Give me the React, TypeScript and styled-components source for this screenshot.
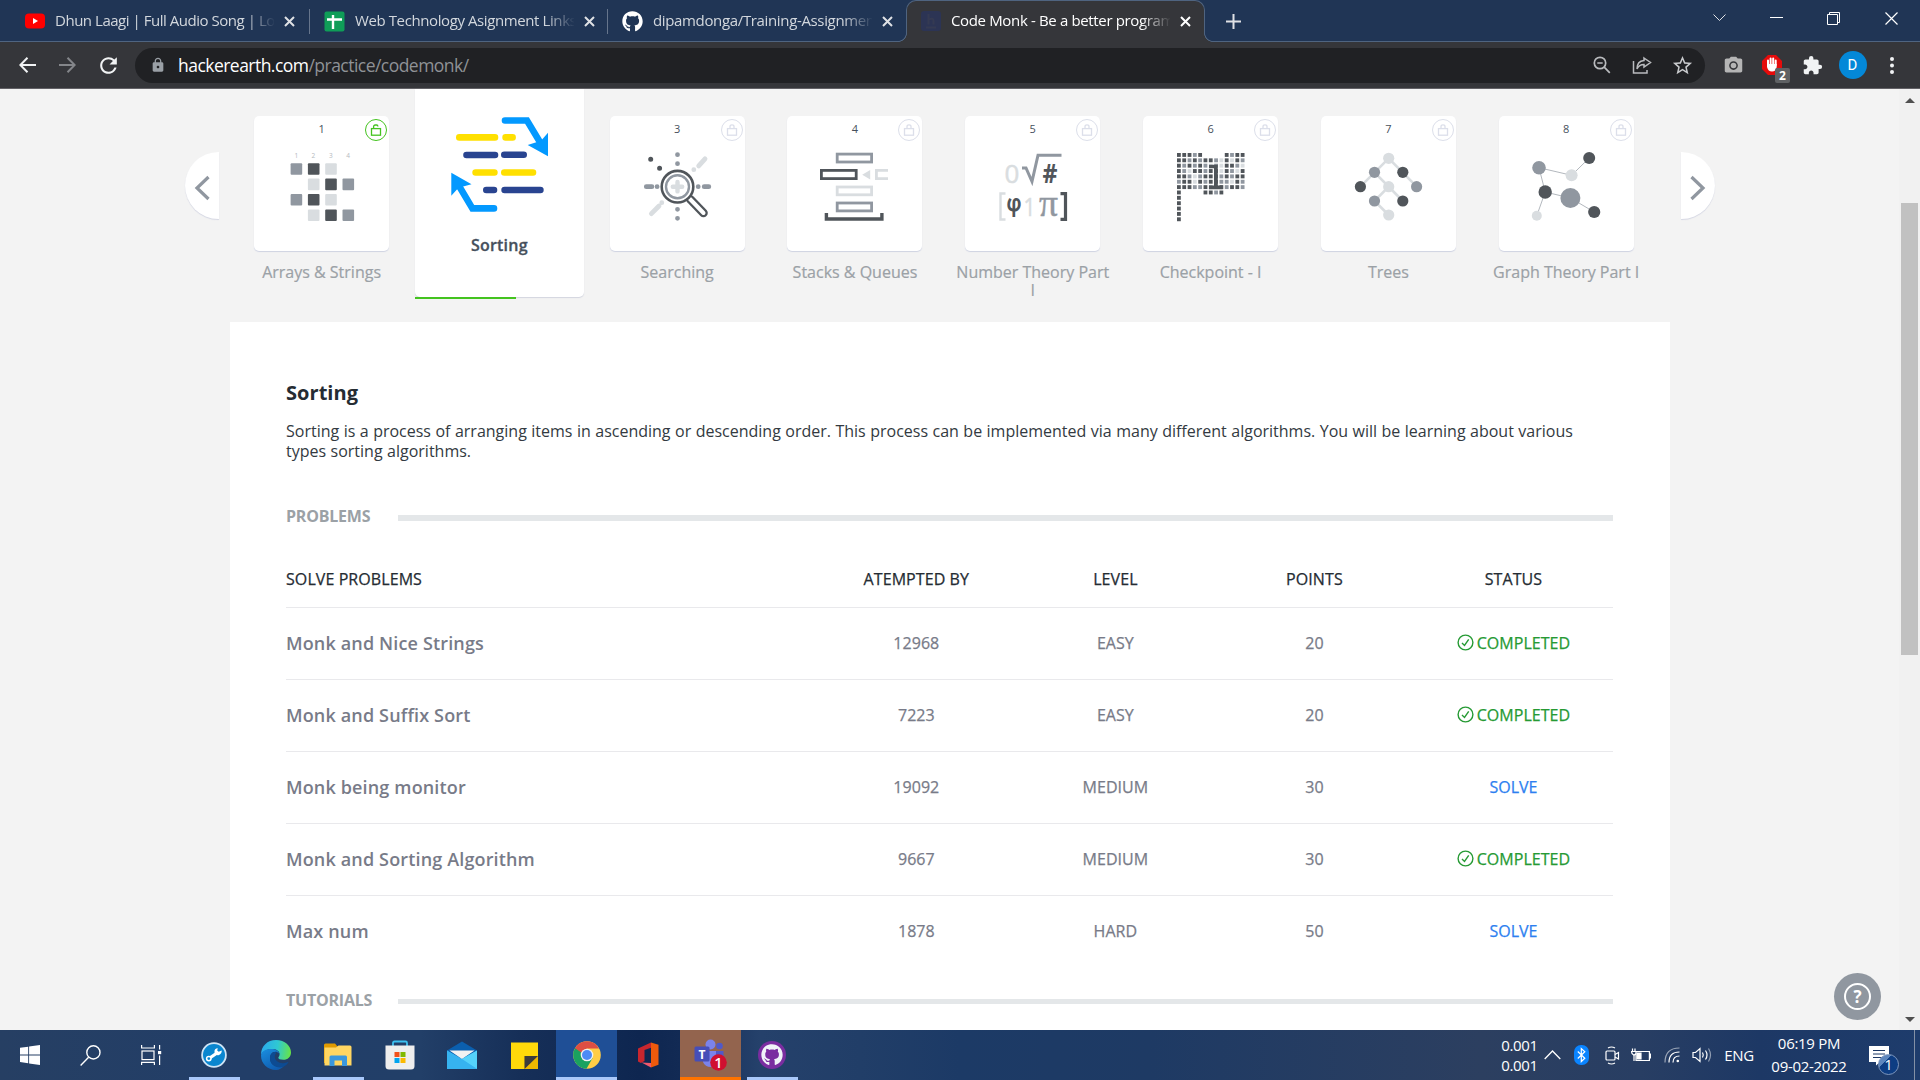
import React from "react";
import styled, { createGlobalStyle, css } from "styled-components";
import { FaGithub } from "react-icons/fa";
import { MdExtension, MdStarBorder, MdPhotoCamera, MdLock, MdRefresh } from "react-icons/md";

const DARK = "#50555a";
const GREY = "#9097a0";
const LIGHT = "#d9dde0";

const GlobalStyle = createGlobalStyle`
  * { box-sizing: border-box; }
  html, body { margin: 0; padding: 0; overflow: hidden; }
  body { font-family: "Open Sans", "Noto Sans", sans-serif; background: #f3f3f3; }
  svg { display: block; flex: none; }
`;

const Screen = styled.div`
  width: 1920px;
  height: 1080px;
  display: flex;
  flex-direction: column;
  overflow: hidden;
`;

/* ---------- browser chrome ---------- */

const TabStrip = styled.div`
  height: 42px;
  flex: none;
  display: flex;
  background: #203555;
  box-shadow: inset 0 -1px 0 #4f6480;
`;

const Tab = styled.div<{ $w: number; $active?: boolean; $sep?: boolean; $first?: boolean }>`
  position: relative;
  width: ${(p) => p.$w}px;
  height: 42px;
  display: flex;
  align-items: center;
  padding: 0 0 0 ${(p) => (p.$first ? 24 : 14)}px;
  color: ${(p) => (p.$active ? "#ffffff" : "#d2d7dd")};
  ${(p) =>
    p.$sep &&
    css`
      &::after {
        content: "";
        position: absolute;
        right: 0;
        top: 9px;
        width: 1px;
        height: 25px;
        background: #66758c;
      }
    `}
  ${(p) =>
    p.$active &&
    css`
      background: #35363a;
      border: 1px solid #4f6480;
      border-bottom: none;
      border-radius: 10px 10px 0 0;
      padding-left: 13px;
      padding-bottom: 1px;
      &::before,
      &::after {
        content: "";
        position: absolute;
        bottom: 0;
        width: 9px;
        height: 9px;
      }
      &::before {
        left: -9px;
        background: radial-gradient(circle at 0 0, #203555 7.6px, #4f6480 8.2px, #4f6480 8.6px, #35363a 9.2px);
      }
      &::after {
        right: -9px;
        background: radial-gradient(circle at 100% 0, #203555 7.6px, #4f6480 8.2px, #4f6480 8.6px, #35363a 9.2px);
      }
    `}
`;

const Favicon = styled.div`
  width: 21px;
  height: 21px;
  flex: none;
  display: flex;
  align-items: center;
  justify-content: center;
`;

const TabTitle = styled.div<{ $ls?: number }>`
  width: 219px;
  margin: 0 0 2px 10px;
  font-size: 15px;
  line-height: 22px;
  letter-spacing: ${(p) => p.$ls ?? -0.35}px;
  white-space: nowrap;
  overflow: hidden;
  mask-image: linear-gradient(90deg, #000 190px, transparent 220px);
`;

const TabClose = styled.div`
  margin-left: 10px;
`;

const NewTab = styled.div`
  width: 54px;
  margin-left: 1px;
  display: flex;
  align-items: center;
  justify-content: center;
`;

const WindowControls = styled.div`
  margin-left: auto;
  display: flex;
  height: 36px;
`;

const WinButton = styled.div`
  width: 57.4px;
  display: flex;
  align-items: center;
  justify-content: center;
`;

const Toolbar = styled.div`
  height: 47px;
  flex: none;
  display: flex;
  align-items: center;
  background: #35363a;
  border-bottom: 1px solid #626166;
  padding: 0 7px 0 7px;
`;

const ToolButton = styled.div<{ $w: number; $ml?: number }>`
  position: relative;
  width: ${(p) => p.$w}px;
  height: 30px;
  margin-left: ${(p) => p.$ml ?? 0}px;
  flex: none;
  display: flex;
  align-items: center;
  justify-content: center;
`;

const AddressBar = styled.div`
  width: 1570px;
  height: 35px;
  margin-left: 7px;
  display: flex;
  align-items: center;
  border-radius: 18px;
  background: #202124;
  padding: 0 2px 0 15px;
`;

const Url = styled.div`
  flex: 1;
  margin-left: 12px;
  font-size: 17.5px;
  line-height: 30px;
  letter-spacing: -0.53px;
  color: #8f9296;
  span {
    color: #ffffff;
  }
`;

const Avatar = styled.div`
  width: 28px;
  height: 28px;
  border-radius: 50%;
  background: #0488d8;
  color: #fff;
  font: 15px/28px Roboto, sans-serif;
  text-align: center;
`;

const BlockCount = styled.div`
  position: absolute;
  left: 22px;
  top: 18px;
  width: 15px;
  height: 15px;
  border-radius: 2px;
  background: #5f6164;
  color: #fff;
  font: 700 12px/16px "Open Sans", sans-serif;
  text-align: center;
`;

/* ---------- page ---------- */

const Viewport = styled.div`
  height: 941px;
  flex: none;
  display: flex;
  overflow: hidden;
  position: relative;
`;

const Page = styled.div`
  width: 1899px;
  display: flex;
  flex-direction: column;
  align-items: center;
  background: #f3f3f3;
`;

const Scrollbar = styled.div`
  width: 21px;
  background: #f1f1f1;
  display: flex;
  flex-direction: column;
  align-items: center;
`;

const ScrollArrow = styled.div<{ $down?: boolean }>`
  width: 0;
  height: 0;
  margin: ${(p) => (p.$down ? "auto 0 8px" : "9px 0 0")};
  border: 5px solid transparent;
  ${(p) => (p.$down ? "border-top-color: #505050; border-bottom: none;" : "border-bottom-color: #505050; border-top: none;")}
`;

const ScrollThumb = styled.div`
  width: 17px;
  height: 452px;
  margin-top: 100px;
  background: #c1c1c1;
`;

const Carousel = styled.div`
  width: 1530px;
  height: 233px;
  margin-left: 1px;
  flex: none;
  display: flex;
`;

const ArrowButton = styled.div<{ $side: "left" | "right" }>`
  width: 34px;
  height: 67px;
  margin-top: 63px;
  margin-left: ${(p) => (p.$side === "right" ? "auto" : "0")};
  padding-top: 4px;
  display: flex;
  align-items: center;
  justify-content: center;
  background: #fff;
  border-radius: ${(p) => (p.$side === "left" ? "34px 0 0 34px" : "0 34px 34px 0")};
  box-shadow: 0 1px 1px #d5d7e3;
`;

const Topics = styled.div`
  display: grid;
  grid-template-columns: repeat(8, 177.8px);
  margin-left: 13.7px;
`;

const Topic = styled.div`
  display: flex;
  flex-direction: column;
  align-items: center;
  padding-top: 27px;
`;

const TopicCard = styled.div`
  position: relative;
  width: 135px;
  height: 135px;
  flex: none;
  background: #fff;
  border-radius: 5px;
  box-shadow: 0 1px 1px #cfd3e2;
`;

const TopicNumber = styled.div`
  position: absolute;
  left: 0;
  right: 0;
  top: 5px;
  text-align: center;
  font-size: 11px;
  line-height: 16px;
  color: #46505c;
`;

const LockBadge = styled.div<{ $open?: boolean }>`
  position: absolute;
  right: 2px;
  top: 3px;
  width: 22px;
  height: 22px;
  border-radius: 50%;
  border: 1px solid ${(p) => (p.$open ? "#44c31f" : "#dcdfea")};
  color: ${(p) => (p.$open ? "#44c31f" : "#dcdfea")};
  display: flex;
  align-items: center;
  justify-content: center;
`;

const TopicLabel = styled.div`
  width: 160px;
  margin-top: 12px;
  font-size: 16px;
  line-height: 18px;
  text-align: center;
  color: #9ba1a6;
  -webkit-text-stroke: 0.2px #9ba1a6;
`;

const CurrentTopic = styled.div`
  position: relative;
  justify-self: center;
  width: 169px;
  height: 208px;
  background: #fff;
  border-radius: 0 0 5px 5px;
  box-shadow: 0 1px 1px #d3d5df;
`;

const CurrentLabel = styled.div`
  position: absolute;
  left: 0;
  right: 0;
  top: 144px;
  text-align: center;
  font-size: 16px;
  line-height: 24px;
  font-weight: 600;
  letter-spacing: 0.2px;
  color: #46505c;
  -webkit-text-stroke: 0.3px #46505c;
`;

const Progress = styled.div`
  position: absolute;
  left: 0;
  bottom: -2px;
  width: 101px;
  height: 2px;
  background: #44c31f;
`;

const Panel = styled.div`
  width: 1440px;
  height: 708px;
  margin-left: 1px;
  flex: none;
  background: #fff;
  padding: 55px 57px 0 56px;
`;

const Heading = styled.h1`
  margin: 0;
  font-size: 20px;
  line-height: 32px;
  font-weight: 700;
  letter-spacing: 0.05px;
  color: #252c33;
`;

const Description = styled.p`
  margin: 12px 0 0;
  width: 1310px;
  font-size: 16px;
  line-height: 20px;
  word-spacing: 0.31px;
  color: #333a41;
`;

const Section = styled.div<{ $top: number; $bar: number }>`
  display: flex;
  align-items: center;
  height: 24px;
  margin-top: ${(p) => p.$top}px;
  font-size: 16px;
  font-weight: 700;
  letter-spacing: -0.22px;
  color: #9ba1a6;
  &::after {
    content: "";
    flex: none;
    width: 1215px;
    margin-left: auto;
    margin-top: 3px;
    height: ${(p) => p.$bar}px;
    background: #e4e7e9;
  }
`;

const Row = styled.div<{ $head?: boolean }>`
  display: grid;
  grid-template-columns: 40% 15% 15% 15% 15%;
  align-items: center;
  height: ${(p) => (p.$head ? 57 : 72)}px;
  margin-top: ${(p) => (p.$head ? 23 : 0)}px;
  padding-bottom: ${(p) => (p.$head ? 0 : 2)}px;
  border-bottom: 1px solid #e9e9ec;
  color: ${(p) => (p.$head ? "#252c33" : "#787b88")};
  font-size: 16px;
  letter-spacing: ${(p) => (p.$head ? 0.08 : 0.03)}px;
  -webkit-text-stroke: 0.25px currentColor;
  &:last-of-type {
    border-bottom-color: transparent;
  }
`;

const Problem = styled.div`
  font-size: 18px;
  font-weight: 600;
  letter-spacing: 0.15px;
  -webkit-text-stroke: 0;
`;

const Cell = styled.div<{ $tone?: "done" | "link"; $start?: boolean }>`
  display: flex;
  align-items: center;
  justify-content: ${(p) => (p.$start ? "flex-start" : "center")};
  gap: 3px;
  color: ${(p) => (p.$tone === "done" ? "#269a34" : p.$tone === "link" ? "#2d7ff0" : "inherit")};
`;

const HelpButton = styled.div`
  position: absolute;
  left: 1834px;
  top: 884px;
  width: 47px;
  height: 47px;
  border-radius: 50%;
  background: #9097a0;
  display: flex;
  align-items: center;
  justify-content: center;
`;

const HelpRing = styled.div`
  width: 27px;
  height: 27px;
  border: 2px solid #fff;
  border-radius: 50%;
  color: #fff;
  font-size: 17px;
  font-weight: 700;
  line-height: 23px;
  text-align: center;
`;

/* ---------- taskbar ---------- */

const Taskbar = styled.div`
  height: 50px;
  flex: none;
  display: flex;
  color: #fff;
  background: linear-gradient(90deg, #263f63 0, #223e68 240px, #223f68 420px, #162f58 520px, #0e2650 640px, #122a54 680px, #25416b 760px, #213e68 860px, #1c3a66 960px, #1e3a64 1150px, #2c3f60 1480px, #283e63 1640px, #1d3865 1760px, #1e3c6c 1920px);
`;

const TaskButton = styled.div<{ $w?: number; $state?: "open" | "active" | "alert" }>`
  width: ${(p) => p.$w ?? 62}px;
  height: 50px;
  display: flex;
  align-items: center;
  justify-content: center;
  background: ${(p) => (p.$state === "active" ? "#1f4f96" : p.$state === "alert" ? "#93644e" : "transparent")};
  position: relative;
  ${(p) =>
    p.$state &&
    css`
      &::after {
        content: "";
        position: absolute;
        bottom: 0;
        left: ${p.$state === "open" ? 6 : 0}px;
        right: ${p.$state === "open" ? 5 : 0}px;
        height: 3px;
        background: ${p.$state === "alert" ? "#ff7300" : "#a9c8fa"};
      }
    `}
`;

const Tray = styled.div`
  margin-left: auto;
  display: flex;
  align-items: center;
`;

const TrayItem = styled.div<{ $w: number; $size?: number; $lh?: number }>`
  width: ${(p) => p.$w}px;
  height: 50px;
  display: flex;
  flex-direction: column;
  align-items: center;
  justify-content: center;
  font-size: ${(p) => p.$size ?? 15}px;
  line-height: ${(p) => p.$lh ?? 23}px;
  letter-spacing: -0.3px;
  white-space: nowrap;
  position: relative;
`;

const NoticeIcon = styled.svg`
  margin: 1px 0 0 -6px;
`;

const NoticeCount = styled.div`
  position: absolute;
  left: 21px;
  top: 24px;
  width: 21px;
  height: 21px;
  border: 1px solid #7d96bd;
  border-radius: 50%;
  background: linear-gradient(135deg, #5d86bd 0 32%, #0d3d83 33%);
  text-align: center;
  line-height: 19px;
  font-size: 15px;
`;

const DesktopEdge = styled.div`
  width: 6px;
  height: 50px;
  margin-left: 7px;
  border-left: 1px solid #8390a5;
`;

/* ---------- drawings ---------- */

const CloseX = ({ color = "#dfe1e5" }: { color?: string }) => (
  <svg width="11" height="11" viewBox="0 0 11 11" stroke={color} strokeWidth="2">
    <path d="M1 1l9 9M10 1l-9 9" />
  </svg>
);

const YouTube = () => (
  <svg width="20" height="16" viewBox="0 0 20 16">
    <rect width="20" height="15" y=".5" rx="4" fill="#f00" />
    <path d="M8 5v6l5-3z" fill="#fff" />
  </svg>
);

const Sheets = () => (
  <svg width="21" height="21" viewBox="0 0 21 21">
    <rect width="20" height="20" x=".5" y=".5" rx="2" fill="#0f9d58" />
    <path d="M9 4v14M3 8.5h15" stroke="#fff" strokeWidth="2.4" />
  </svg>
);

const HackerEarth = () => (
  <svg width="20" height="20" viewBox="0 0 20 20">
    <rect width="20" height="20" rx="3" fill="#2c3454" />
    <path d="M7.5 3v10.5M7.5 8.5q5-2 5 1v4M5 16.5h10" fill="none" stroke="#353a52" strokeWidth="2" />
  </svg>
);

const Squares = () => {
  const rows = [
    [GREY, DARK, LIGHT, ""],
    ["", LIGHT, DARK, GREY],
    [GREY, DARK, LIGHT, ""],
    ["", LIGHT, DARK, GREY],
  ];
  return (
    <>
      {[42.4, 59.4, 76.8, 94].map((x, i) => (
        <text key={i} x={x} y="41.5" fontSize="6.5" textAnchor="middle" fill="#b4b9be">{i + 1}</text>
      ))}
      {rows.map((r, j) =>
        r.map((c, i) => c && <rect key={`${i}${j}`} x={36.6 + i * 17.3} y={47.2 + j * 15.4} width="11.6" height="11.6" rx="1" fill={c} />)
      )}
    </>
  );
};

const Searching = () => (
  <g fill="none" strokeLinecap="round">
    <path d="M67.5 38.7v.01M67.5 47.7v.01M67.5 93.3v.01M67.5 102.3v.01M47.1 70.7v.01M88.2 70.7v.01" stroke={GREY} strokeWidth="4.8" />
    <path d="M36.3 70.7h5.6M94.2 70.7h4.6" stroke={GREY} strokeWidth="4.8" />
    <path d="M40.7 43.3v.01M49.6 52.3v.01" stroke={DARK} strokeWidth="5" />
    <path d="M95 42.9l-6.3 7M83.8 53.7v.01M51.8 86.7v.01M49 90l-7.6 7.6" stroke={LIGHT} strokeWidth="4.8" />
    <path d="M80.5 83.5L93.5 97" stroke={DARK} strokeWidth="8.6" />
    <path d="M79.5 82.5L93.5 97" stroke="#fff" strokeWidth="4" />
    <circle cx="67.5" cy="70.7" r="15.8" stroke={DARK} strokeWidth="2.6" fill="#fff" />
    <circle cx="67.5" cy="70.7" r="11.5" stroke={GREY} strokeWidth="2.4" />
    <path d="M67.5 66v9.4M62.8 70.7h9.4" stroke={LIGHT} strokeWidth="4.4" />
  </g>
);

const Stacks = () => (
  <g fill="none" strokeWidth="2.8">
    <rect x="50.2" y="38.1" width="34.4" height="7.9" stroke={GREY} />
    <rect x="34.4" y="54.4" width="34.8" height="8.2" stroke={DARK} />
    <path d="M75.2 58.7l8-4.8v9.6z" fill={LIGHT} />
    <path d="M101 54.4H89.4v8.2H101" stroke={LIGHT} />
    <rect x="50.2" y="71" width="34.4" height="7.8" stroke={LIGHT} />
    <rect x="50.2" y="87" width="34.4" height="7.9" stroke={GREY} />
    <path d="M39.4 97v6h55.5v-6" stroke={DARK} strokeWidth="3.4" />
  </g>
);

const NumberTheory = () => (
  <g fontFamily="Open Sans, sans-serif" textAnchor="middle">
    <text x="47" y="66.5" fontSize="26" fill={LIGHT} stroke={LIGHT} strokeWidth=".5">0</text>
    <path d="M57 52h4l6 13.5 6-26.3h23.5" fill="none" stroke={GREY} strokeWidth="3" />
    <text x="85" y="66.5" fontSize="26" fontWeight="700" fill={DARK} textLength="15" lengthAdjust="spacingAndGlyphs">#</text>
    <path d="M40.5 77.5h-5v26h5" fill="none" stroke={LIGHT} strokeWidth="2.4" />
    <path d="M95.5 77.7h5v25.6h-5" fill="none" stroke={DARK} strokeWidth="3.2" />
    <text x="49" y="95" fontSize="23" fontWeight="700" fill={DARK} textLength="15" lengthAdjust="spacingAndGlyphs">φ</text>
    <text x="64.5" y="99.5" fontSize="26" fill={LIGHT} stroke={LIGHT} strokeWidth=".5" textLength="12" lengthAdjust="spacingAndGlyphs">1</text>
    <text x="83.5" y="99.5" fontSize="38" fontFamily="Liberation Serif, serif" fill={GREY} stroke={GREY} strokeWidth=".4" textLength="19" lengthAdjust="spacingAndGlyphs">π</text>
  </g>
);

const FLAG = [
  "33323....3233",
  "3323233213132",
  "3232321213321",
  "3213323313213",
  "3321233323233",
  "2331323322132",
  "3332232232332",
];

const Flag = () => {
  const tones = ["", LIGHT, GREY, DARK];
  const cells: [number, number, string][] = [];
  FLAG.forEach((line, j) => [...line].forEach((c, i) => c !== "." && cells.push([i, j, tones[+c]])));
  [0, 5, 6, 7, 8].forEach((i) => cells.push([i, 7, i === 7 ? GREY : DARK]));
  for (let j = 8; j < 13; j++) cells.push([0, j, DARK]);
  return (
    <>
      {cells.map(([i, j, c]) => (
        <rect key={`${i}-${j}`} x={34 + i * 5.31} y={37 + j * 5.36} width="3.8" height="3.9" fill={c} />
      ))}
      <path d="M66 48.7h8.8v20.8h5v3.8H66v-3.8h5V52.3h-5z" fill={DARK} />
    </>
  );
};

const Tree = () => (
  <>
    <path d="M67.7 42.3L39.4 70.7M67.7 42.3l28 28.4M53.5 56.3L81.8 85M67.7 70.7L53.5 85l14.2 14" stroke={LIGHT} strokeWidth="2.6" fill="none" />
    {([[67.7, 42.3, LIGHT], [53.5, 56.3, GREY], [81.8, 56.3, DARK], [39.4, 70.7, DARK], [67.7, 70.7, LIGHT], [95.6, 70.7, GREY], [53.5, 85, GREY], [81.8, 85, DARK], [67.7, 99, LIGHT]] as [number, number, string][]).map(([x, y, c]) => (
      <circle key={`${x}${y}`} cx={x} cy={y} r="5.6" fill={c} />
    ))}
  </>
);

const Graph = () => (
  <>
    <path d="M90.2 42L72.6 59.3 40 51.7 46.2 76l25.2 6 23.8 14M46.2 76l-8.4 23.7" stroke="#b3b8be" fill="none" strokeWidth="1" />
    {([[40, 51.7, 6.8, GREY], [72.6, 59.3, 6, LIGHT], [90.2, 42, 6, DARK], [46.2, 76, 6.7, DARK], [71.4, 82, 10, GREY], [37.8, 99.7, 5, LIGHT], [95.2, 96, 6.1, DARK]] as [number, number, number, string][]).map(([x, y, r, c]) => (
      <circle key={`${x}`} cx={x} cy={y} r={r} fill={c} />
    ))}
  </>
);

const SortingArt = () => (
  <svg width="169" height="140" viewBox="0 0 169 140" fill="none">
    <g strokeWidth="6.6" strokeLinecap="round">
      <path d="M44.3 48.4H80M90.6 48.4h7M60.6 83.5h18.8M89.3 83.5h28.7" stroke="#ffe000" />
      <path d="M51.5 66H80M89.3 65.7h19.4M71.3 101h7.7M89.6 101h35.8" stroke="#294490" />
      <path d="M90 31.5h22l13.5 22.5M79 119.4H57.4L44.5 97.800" stroke="#0399ff" />
    </g>
    <path d="M112.7 56L126 51.800l7-8v23.400z" fill="#0399ff" />
    <path d="M36.3 83.800l20.2 11.400L43.5 98.800l-7.2 8z" fill="#0399ff" />
  </svg>
);

const Padlock = ({ open }: { open?: boolean }) => (
  <svg width="12" height="13" viewBox="0 0 12 13" fill="none" stroke="currentColor" strokeWidth="1.3">
    <rect x="1.5" y="4.6" width="9" height="6.6" />
    <path d={open ? "M3.6 4.6V2.6q0-1.6 1.7-1.6h1.3q1.3 0 1.3 1.4" : "M4 4.6V2.6Q4 .9 6 .9t2 1.7v2"} />
  </svg>
);

const CheckCircle = () => (
  <svg width="17" height="17" viewBox="0 0 17 17" fill="none" stroke="#269a34" strokeWidth="1.4">
    <circle cx="8.5" cy="8.5" r="7.4" />
    <path d="M5 9l2.5 2.4 4.2-6" />
  </svg>
);

const Chevron = ({ dir }: { dir: "left" | "right" }) => (
  <svg width="18" height="28" viewBox="0 0 18 28" fill="none" stroke="#9097a0" strokeWidth="3.2">
    <path d={dir === "left" ? "M15.5 3L4 14l11.5 11" : "M2.5 3L14 14 2.5 25"} />
  </svg>
);

const WindowsLogo = () => (
  <svg width="20" height="20" viewBox="0 0 20 20" fill="#fff">
    <path d="M0 2.8l8.2-1.1v7.8H0zM9.1 1.6L20 0v9.5H9.1zM0 10.4h8.2v7.9L0 17.1zM9.1 10.4H20V20L9.1 18.4z" />
  </svg>
);

const TaskSearch = () => (
  <svg width="21" height="21" viewBox="0 0 21 21" fill="none" stroke="#fff" strokeWidth="1.4">
    <circle cx="13.4" cy="7.4" r="6.6" />
    <path d="M8.6 12.2L.6 20.4" />
  </svg>
);

const TaskView = () => (
  <svg width="21" height="20" viewBox="0 0 21 20" fill="none" stroke="#fff" strokeWidth="1.2">
    <rect x="1" y="6" width="12" height="8.6" />
    <path d="M.6 0v3h12.8V0M.6 20v-2.6h12.8V20M18.6 0v4.6M18.6 10.5V20" />
    <rect x="17.6" y="6.6" width="2" height="2" fill="#fff" />
  </svg>
);

const Wrench = () => (
  <svg width="26" height="26" viewBox="0 0 26 26">
    <circle cx="13" cy="13" r="11.9" fill="#0a86cf" stroke="#cfe4f5" strokeWidth="1.8" />
    <path d="M8 16.5l8-5.5" stroke="#fff" strokeWidth="3.2" />
    <circle cx="7.8" cy="16.6" r="2.2" fill="#0a86cf" stroke="#fff" strokeWidth="1.5" />
    <path d="M20.7 8.6l-3 1.2-1.5-1.2.6-2.4c-2.3 0-3.6 1.6-3.3 4 .3 2.2 2.4 3.5 4.5 2.8 1.8-.6 2.9-2.3 2.7-4.4z" fill="#fff" />
  </svg>
);

const Edge = () => (
  <svg width="30" height="30" viewBox="0 0 30 30">
    <defs>
      <linearGradient id="eg1" x1="0" x2="1" y1=".3" y2=".4">
        <stop offset="0" stopColor="#2aa9ee" />
        <stop offset=".55" stopColor="#2fc8d2" />
        <stop offset="1" stopColor="#66e34a" />
      </linearGradient>
      <linearGradient id="eg2" x1="0" x2=".6" y1="0" y2="1">
        <stop offset="0" stopColor="#1a8fe0" />
        <stop offset="1" stopColor="#0f5cb0" />
      </linearGradient>
    </defs>
    <path d="M0 15C0 6 6.5 0 15 0c9 0 15 6 15 12.5 0 4.5-3.4 7.3-7.5 7.3-3.5 0-5.2-1-5.2-2 0-.8 1.3-1.3 1.3-3.8C18.6 11 15 9 11.5 9 5.5 9 1 12 0 15z" fill="url(#eg1)" />
    <path d="M0 15.500C.5 11 5 9 10.5 9c4 0 7.5 2 8 5-1.5-2-3-2.3-4-2.3-3.5 0-5.5 3-5.5 6.3 0 5.5 4.5 9 9.5 9 2 0 3.5-.4 4.5-.9C21 28.5 18 30 15 30 6.5 30 0 23.5 0 15.5z" fill="url(#eg2)" />
    <path d="M9 18.5c0-4 2-6.5 5-6.5.6 0 1.3.2 1.8.5-1.3 1-2 2.5-2 4.2 0 3.5 3.5 6.5 8.2 6.5 2 0 3.5-.5 4.8-1.2.5-.2.8.2.5.6-1.8 2.7-4.8 4.8-8.3 4.8C13.5 27.4 9 24 9 18.5z" fill="#0d4b92" />
  </svg>
);

const Explorer = () => (
  <svg width="28" height="24" viewBox="0 0 28 24">
    <path d="M0 2q0-1.5 1.5-1.5H11l2.5 3H27V20H0z" fill="#e09a00" />
    <path d="M.5 4.5H12l2.5-2H26q1.5 0 1.5 1.5v18.5H.5z" fill="#ffd662" />
    <path d="M5.5 23V14q0-1.5 1.5-1.5h14.5Q23 12.5 23 14v9h-5v-5.5h-7.5V23z" fill="#3a97dd" />
  </svg>
);

const Store = () => (
  <svg width="30" height="30" viewBox="0 0 30 30">
    <path d="M8 6V3q0-1.5 1.5-1.5h11Q22 1.5 22 3v3" fill="none" stroke="#3cc0f0" strokeWidth="1.8" />
    <path d="M.5 5.5h29V26q0 3.5-3.5 3.5H4Q.5 29.5.5 26z" fill="#eeeeee" />
    <path fill="#f1511b" d="M9.5 12h5v5h-5z" />
    <path fill="#80b900" d="M15.5 12h5v5h-5z" />
    <path fill="#00a4ef" d="M9.5 18h5v5h-5z" />
    <path fill="#fbb900" d="M15.5 18h5v5h-5z" />
  </svg>
);

const Mail = () => (
  <svg width="30" height="29" viewBox="0 0 30 29">
    <path d="M0 9.5L15 .5l15 9-15 10z" fill="#0b5fae" />
    <path d="M0 9.5L15 18l15-8.5V28H0z" fill="#36b3f0" />
    <path d="M2.5 9.5h25L15 18z" fill="#f2f2f2" />
    <path d="M30 9.5V28L15 18z" fill="#55d2fa" />
    <path d="M0 28V9.500L30 28z" fill="#36b3f0" />
  </svg>
);

const Sticky = () => (
  <svg width="27" height="27" viewBox="0 0 27 27">
    <path d="M0 .5h27V27H0z" fill="#ffd90a" />
    <path d="M13.5 14H27v13H13.5z" fill="#f0b800" />
    <path d="M13.5 14H27L13.5 27z" fill="#3c3c3c" />
  </svg>
);

const Chrome = () => (
  <svg width="28" height="28" viewBox="0 0 28 28">
    <circle cx="14" cy="14" r="13.8" fill="#ffcd46" />
    <path d="M2 7.2A13.8 13.8 0 0 0 13.5 27.8L19.6 17 14 14z" fill="#1aa260" />
    <path d="M2 7.2L8.3 17.5 14 14 7 4z" fill="#1aa260" />
    <path d="M2 7.2A13.8 13.8 0 0 1 26 7.5H14L8.3 11.5z" fill="#dd4f43" />
    <circle cx="14" cy="14" r="6.3" fill="#f1f1f1" />
    <circle cx="14" cy="14" r="5" fill="#4c8bf5" />
  </svg>
);

const Office = () => (
  <svg width="21" height="26" viewBox="0 0 21 26">
    <path d="M0 6.5L13 .5v5.2L6.5 8v11L2.8 21 0 19.5z" fill="#c8262e" />
    <path d="M13 .5l7.5 2.3v20L13 25.5z" fill="#ee5a0c" />
    <path d="M3.5 20.5L13 21v4.5z" fill="#f0576c" />
  </svg>
);

const Teams = () => (
  <svg width="33" height="32" viewBox="0 0 33 32">
    <circle cx="16.5" cy="5.5" r="5" fill="#7b83eb" />
    <circle cx="25.5" cy="7" r="3.3" fill="#5059c9" />
    <path d="M9 12h14v11q0 5-6 5t-8-5z" fill="#7b83eb" />
    <path d="M22 12h7.5v9q0 3-4 3H22z" fill="#5059c9" />
    <rect y="7.5" x=".5" width="15" height="15" rx="1.5" fill="#464eb8" />
    <text x="8" y="19.5" fontSize="12" fontWeight="700" fill="#fff" textAnchor="middle">T</text>
    <circle cx="24.5" cy="23.5" r="8.3" fill="#d01030" />
    <text x="24.5" y="28.8" fontSize="14.5" fontWeight="600" fill="#fff" textAnchor="middle">1</text>
  </svg>
);

const GithubRound = styled.div`
  width: 28px;
  height: 28px;
  border-radius: 50%;
  background: #7a2da0;
  display: flex;
  align-items: center;
  justify-content: center;
  color: #f0f3f8;
`;

const topics: { n: number; name: string; art: React.ReactNode; open?: boolean }[] = [
  { n: 1, name: "Arrays & Strings", art: <Squares />, open: true },
  { n: 2, name: "Sorting", art: null },
  { n: 3, name: "Searching", art: <Searching /> },
  { n: 4, name: "Stacks & Queues", art: <Stacks /> },
  { n: 5, name: "Number Theory Part I", art: <NumberTheory /> },
  { n: 6, name: "Checkpoint - I", art: <Flag /> },
  { n: 7, name: "Trees", art: <Tree /> },
  { n: 8, name: "Graph Theory Part I", art: <Graph /> },
];

const problems: [string, number, string, number, boolean][] = [
  ["Monk and Nice Strings", 12968, "EASY", 20, true],
  ["Monk and Suffix Sort", 7223, "EASY", 20, true],
  ["Monk being monitor", 19092, "MEDIUM", 30, false],
  ["Monk and Sorting Algorithm", 9667, "MEDIUM", 30, true],
  ["Max num", 1878, "HARD", 50, false],
];

const BrowserTabs = () => (
  <TabStrip>
    <Tab $w={310} $sep $first>
      <Favicon><YouTube /></Favicon>
      <TabTitle $ls={-0.47}>Dhun Laagi | Full Audio Song | Lo</TabTitle>
      <TabClose><CloseX /></TabClose>
    </Tab>
    <Tab $w={298} $sep>
      <Favicon><Sheets /></Favicon>
      <TabTitle $ls={-0.4}>Web Technology Asignment Links</TabTitle>
      <TabClose><CloseX /></TabClose>
    </Tab>
    <Tab $w={298}>
      <Favicon><FaGithub size={21} color="#fff" /></Favicon>
      <TabTitle>dipamdonga/Training-Assignmen</TabTitle>
      <TabClose><CloseX /></TabClose>
    </Tab>
    <Tab $w={299} $active>
      <Favicon><HackerEarth /></Favicon>
      <TabTitle>Code Monk - Be a better program</TabTitle>
      <TabClose><CloseX color="#fff" /></TabClose>
    </Tab>
    <NewTab>
      <svg width="15" height="15" viewBox="0 0 15 15" stroke="#dfe1e5" strokeWidth="2"><path d="M7.5 0v15M0 7.5h15" /></svg>
    </NewTab>
    <WindowControls>
      <WinButton><svg width="13" height="8" viewBox="0 0 13 8" fill="none" stroke="#dfe1e5"><path d="M.5.5l6 6 6-6" /></svg></WinButton>
      <WinButton><svg width="13" height="2" viewBox="0 0 13 2"><path d="M0 .5h13" stroke="#fff" /></svg></WinButton>
      <WinButton><svg width="13" height="13" viewBox="0 0 13 13" fill="none" stroke="#fff"><path d="M.5 2.5h10v10h-10zM2.5 2.5v-2h10v10h-2" /></svg></WinButton>
      <WinButton><svg width="13" height="13" viewBox="0 0 13 13" fill="none" stroke="#fff" strokeWidth="1.2"><path d="M.5.5l12 12M12.5.5l-12 12" /></svg></WinButton>
    </WindowControls>
  </TabStrip>
);

const BrowserToolbar = () => (
  <Toolbar>
    <ToolButton $w={40}>
      <svg width="17" height="16" viewBox="0 0 17 16" fill="none" stroke="#f1f3f4" strokeWidth="2"><path d="M17 8H1.5M8.5.8L1.3 8l7.2 7.2" /></svg>
    </ToolButton>
    <ToolButton $w={41}>
      <svg width="17" height="16" viewBox="0 0 17 16" fill="none" stroke="#84868a" strokeWidth="2"><path d="M0 8h15.5M8.5.8L15.7 8l-7.2 7.2" /></svg>
    </ToolButton>
    <ToolButton $w={40}><MdRefresh size={25} color="#f1f3f4" /></ToolButton>
    <AddressBar>
      <MdLock size={16} color="#9aa0a6" />
      <Url><span>hackerearth.com</span>/practice/codemonk/</Url>
      <ToolButton $w={38}>
        <svg width="18" height="18" viewBox="0 0 18 18" fill="none" stroke="#b9bbbe" strokeWidth="1.7"><circle cx="7" cy="7" r="5.7" /><path d="M11.2 11.2l5.6 5.6M4.3 7h5.4" /></svg>
      </ToolButton>
      <ToolButton $w={41}>
        <svg width="20" height="18" viewBox="0 0 20 18" fill="none" stroke="#b9bbbe" strokeWidth="1.5"><path d="M1.5 5v12H15v-3M12 2l6.5 4.5L12 11V8.5Q7 8.5 5 13q0-8 7-8.5z" /></svg>
      </ToolButton>
      <ToolButton $w={41}><MdStarBorder size={23} color="#c8cacd" /></ToolButton>
    </AddressBar>
    <ToolButton $w={40} $ml={8}><MdPhotoCamera size={21} color="#b5b5b5" /></ToolButton>
    <ToolButton $w={38}>
      <svg width="20" height="20" viewBox="0 0 20 20"><path d="M6 0h8l6 6v8l-6 6H6l-6-6V6z" fill="#e60b0b" /><path d="M6 10V5.5M8.6 9V3.5M11.2 9V3.5M13.7 10V5.5" stroke="#fff" strokeWidth="2" strokeLinecap="round" /><path d="M5 9h9.7v3q-.8 4.5-4.7 4.5T5 12z" fill="#fff" /></svg>
      <BlockCount>2</BlockCount>
    </ToolButton>
    <ToolButton $w={42}><MdExtension size={21} color="#f1f3f4" /></ToolButton>
    <ToolButton $w={39}><Avatar>D</Avatar></ToolButton>
    <ToolButton $w={39}>
      <svg width="4" height="17" viewBox="0 0 4 17" fill="#f1f3f4"><circle cx="2" cy="2" r="2" /><circle cx="2" cy="8.5" r="2" /><circle cx="2" cy="15" r="2" /></svg>
    </ToolButton>
  </Toolbar>
);

const TopicCarousel = () => (
  <Carousel>
    <ArrowButton $side="left"><Chevron dir="left" /></ArrowButton>
    <Topics>
      {topics.map((t) =>
        t.n === 2 ? (
          <CurrentTopic key={t.n}>
            <SortingArt />
            <CurrentLabel>{t.name}</CurrentLabel>
            <Progress />
          </CurrentTopic>
        ) : (
          <Topic key={t.n}>
            <TopicCard>
              <svg width="135" height="135" viewBox="0 0 135 135">{t.art}</svg>
              <TopicNumber>{t.n}</TopicNumber>
              <LockBadge $open={t.open}><Padlock open={t.open} /></LockBadge>
            </TopicCard>
            <TopicLabel>{t.name}</TopicLabel>
          </Topic>
        )
      )}
    </Topics>
    <ArrowButton $side="right"><Chevron dir="right" /></ArrowButton>
  </Carousel>
);

const WindowsTaskbar = () => (
  <Taskbar>
    <TaskButton $w={60}><WindowsLogo /></TaskButton>
    <TaskButton $w={60}><TaskSearch /></TaskButton>
    <TaskButton $w={63}><TaskView /></TaskButton>
    <TaskButton $state="open"><Wrench /></TaskButton>
    <TaskButton><Edge /></TaskButton>
    <TaskButton $state="open"><Explorer /></TaskButton>
    <TaskButton><Store /></TaskButton>
    <TaskButton><Mail /></TaskButton>
    <TaskButton $w={63}><Sticky /></TaskButton>
    <TaskButton $state="active" $w={61}><Chrome /></TaskButton>
    <TaskButton $w={63}><Office /></TaskButton>
    <TaskButton $state="alert" $w={61}><Teams /></TaskButton>
    <TaskButton $state="open"><GithubRound><FaGithub size={22} /></GithubRound></TaskButton>
    <Tray>
      <TrayItem $w={41} $lh={20}><span>0.001</span><span>0.001</span></TrayItem>
      <TrayItem $w={24}><svg width="17" height="10" viewBox="0 0 17 10" fill="none" stroke="#fff" strokeWidth="1.3"><path d="M.7 9l7.8-8 7.8 8" /></svg></TrayItem>
      <TrayItem $w={35}><svg width="15" height="20" viewBox="0 0 15 20"><rect width="15" height="20" rx="7" fill="#0a84ff" /><path d="M3.8 6.5l7 6.7-3.5 3.3V3.5l3.5 3.2-7 6.8" fill="none" stroke="#fff" strokeWidth="1.2" /></svg></TrayItem>
      <TrayItem $w={26}><svg width="15" height="19" viewBox="0 0 15 19" fill="none" stroke="#fff" strokeWidth="1.2"><rect x="1" y="5" width="9" height="9" rx="1" /><path d="M10 8.5l3.5-2v6.5l-3.5-2M3 2q3.5-2 7 0M3 17q3.5 2 7 0" /></svg></TrayItem>
      <TrayItem $w={32}><svg width="20" height="14" viewBox="0 0 20 14" fill="none" stroke="#fff" strokeWidth="1.2"><path d="M5 3.5h13.4v9H5zM18.4 6h1v4h-1M1.5.5v3M4 .5v3M.5 3.5h4.5v2l-2 2-2-2zM3 7.5V13" /><path d="M6 5h4v6H6z" fill="#fff" /></svg></TrayItem>
      <TrayItem $w={30}><svg width="16" height="16" viewBox="0 0 16 16" fill="none" stroke="#fff" strokeWidth="1.2"><path d="M1 15.5Q1 1 15.5 1" opacity=".55" /><path d="M5 15.5Q5 5 15.5 5M9 15.5Q9 9 15.5 9" /><circle cx="13.8" cy="14" r="1.3" fill="#fff" stroke="none" /></svg></TrayItem>
      <TrayItem $w={30}><svg width="20" height="16" viewBox="0 0 20 16" fill="none" stroke="#fff" strokeWidth="1.2"><path d="M1 5.5h2.5L8 1.5v13l-4.5-4H1zM10.5 5.5q1.5 2.5 0 5M13.5 3.5q3 4.5 0 9" /><path d="M16.5 1.5q4 6.5 0 13" opacity=".5" /></svg></TrayItem>
      <TrayItem $w={44}>ENG</TrayItem>
      <TrayItem $w={96}><span>06:19 PM</span><span>09-02-2022</span></TrayItem>
      <TrayItem $w={50}>
        <NoticeIcon width="20" height="20" viewBox="0 0 20 20"><path d="M0 0h20v16h-9l-4 3.5V16H0z" fill="#fff" /><path d="M4 4.5h12M4 8h12M4 11.5h12" stroke="#1d3865" /></NoticeIcon>
        <NoticeCount>1</NoticeCount>
      </TrayItem>
      <DesktopEdge />
    </Tray>
  </Taskbar>
);

export default function App() {
  return (
    <Screen>
      <GlobalStyle />
      <BrowserTabs />
      <BrowserToolbar />
      <Viewport>
        <Page>
          <TopicCarousel />
          <Panel>
            <Heading>Sorting</Heading>
            <Description>
              Sorting is a process of arranging items in ascending or descending order. This process can be implemented via many different algorithms. You will be learning about various types sorting algorithms.
            </Description>
            <Section $top={43} $bar={6}>PROBLEMS</Section>
            <div>
              <Row $head>
                <Cell $start>SOLVE PROBLEMS</Cell>
                <Cell>ATEMPTED BY</Cell>
                <Cell>LEVEL</Cell>
                <Cell>POINTS</Cell>
                <Cell>STATUS</Cell>
              </Row>
              {problems.map(([name, tries, level, points, done]) => (
                <Row key={name}>
                  <Problem>{name}</Problem>
                  <Cell>{tries}</Cell>
                  <Cell>{level}</Cell>
                  <Cell>{points}</Cell>
                  {done ? <Cell $tone="done"><CheckCircle />COMPLETED</Cell> : <Cell $tone="link">SOLVE</Cell>}
                </Row>
              ))}
            </div>
            <Section $top={20} $bar={5}>TUTORIALS</Section>
          </Panel>
        </Page>
        <Scrollbar>
          <ScrollArrow />
          <ScrollThumb />
          <ScrollArrow $down />
        </Scrollbar>
        <HelpButton><HelpRing>?</HelpRing></HelpButton>
      </Viewport>
      <WindowsTaskbar />
    </Screen>
  );
}
